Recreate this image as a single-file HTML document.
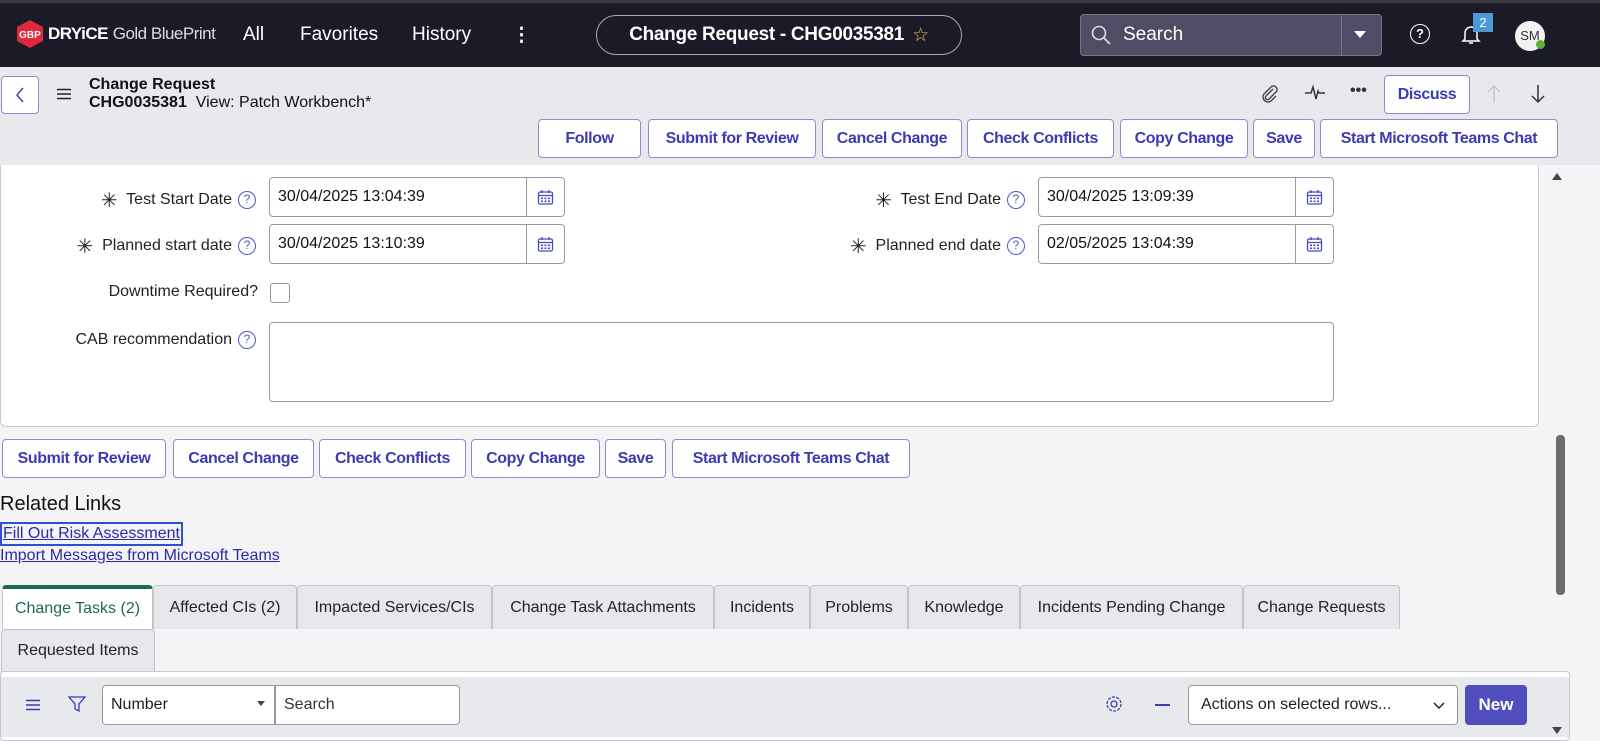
<!DOCTYPE html>
<html><head><meta charset="utf-8"><style>
*{box-sizing:border-box;margin:0;padding:0}
body{width:1600px;height:735px;overflow:hidden;background:#f4f4f6;font-family:"Liberation Sans",sans-serif;color:#1d1d2a;position:relative;font-size:16px}
.a{position:absolute}
.top{left:0;top:0;width:1600px;height:67px;background:#1b1b28;border-top:3px solid #3a3a3e}
.nav{color:#fff;font-size:19px;top:24px}
.btn{position:absolute;height:39px;border:1px solid #8c8ccf;border-radius:4px;background:#fff;color:#3b3bb3;font-size:16px;display:flex;align-items:center;justify-content:center;font-weight:bold;letter-spacing:-0.4px}
.lbl{position:absolute;font-size:16px;color:#222;text-align:right}
.inp{position:absolute;height:40px;border:1px solid #9a9aa2;border-radius:4px;background:#fff;font-size:16px;padding:10px 8px;color:#111}
.cal{position:absolute;right:0;top:0;width:38px;height:38px;border-left:1px solid #9a9aa2;display:flex;align-items:center;justify-content:center}
.q{display:inline-block;width:18px;height:18px;border:1.5px solid #5555c8;border-radius:50%;color:#5555c8;font-size:12px;text-align:center;line-height:15px;margin-left:6px;vertical-align:1px}
.tab{position:absolute;height:44px;border:1px solid #c4c4c8;border-bottom:none;border-radius:4px 4px 0 0;background:#e8e8ec;font-size:16px;display:flex;align-items:center;justify-content:center;color:#222}
</style></head><body>
<svg width="0" height="0" style="position:absolute"><defs><g id="cal"><rect x="1.5" y="3" width="14" height="12" rx="1.5" fill="none" stroke="#4a4ac0" stroke-width="1.3"/><line x1="1.5" y1="6.5" x2="15.5" y2="6.5" stroke="#4a4ac0" stroke-width="1.3"/><line x1="5" y1="1" x2="5" y2="4" stroke="#4a4ac0" stroke-width="1.3"/><line x1="12" y1="1" x2="12" y2="4" stroke="#4a4ac0" stroke-width="1.3"/><g fill="#4a4ac0"><rect x="4" y="8.5" width="2" height="1.6"/><rect x="7.5" y="8.5" width="2" height="1.6"/><rect x="11" y="8.5" width="2" height="1.6"/><rect x="4" y="11.5" width="2" height="1.6"/><rect x="7.5" y="11.5" width="2" height="1.6"/><rect x="11" y="11.5" width="2" height="1.6"/></g></g></defs></svg>
<div class="a top"></div>
<svg class="a" style="left:15px;top:19px" width="30" height="30" viewBox="0 0 30 30"><polygon points="15,1 28,8 28,22 15,29 2,22 2,8" fill="#e0293d"/><text x="15" y="19" font-size="10" font-weight="bold" fill="#fff" text-anchor="middle" font-family="Liberation Sans">GBP</text></svg>
<div class="a" style="left:48px;top:24px;color:#fff;font-size:17px"><b style="letter-spacing:-0.5px">DRYiCE</b> <span style="color:#ddd;letter-spacing:-0.5px">Gold BluePrint</span></div>
<div class="a nav" style="left:243px">All</div>
<div class="a nav" style="left:300px">Favorites</div>
<div class="a nav" style="left:412px">History</div>
<div class="a nav" style="left:512px;font-weight:bold">⋮</div>
<div class="a" style="left:596px;top:15px;width:366px;height:40px;border:1px solid #aaa;border-radius:20px;color:#fff;font-size:19px;font-weight:bold;display:flex;align-items:center;justify-content:center;letter-spacing:-0.3px">Change Request - CHG0035381 <span style="color:#f0c040;margin-left:8px;font-weight:normal">☆</span></div>
<div class="a" style="left:1080px;top:14px;width:302px;height:42px;background:#4f4d66;border:1px solid #777;border-radius:4px"></div>
<div class="a" style="left:1341px;top:15px;width:1px;height:40px;background:#777"></div>
<svg class="a" style="left:1090px;top:24px" width="22" height="22"><circle cx="9" cy="9" r="6.5" stroke="#ddd" stroke-width="1.6" fill="none"/><line x1="14" y1="14" x2="20" y2="20" stroke="#ddd" stroke-width="1.6"/></svg>
<div class="a" style="left:1123px;top:24px;color:#fff;font-size:19px">Search</div>
<div class="a" style="left:1354px;top:31px;border:6px solid transparent;border-top:7px solid #fff"></div>
<div class="a" style="left:1410px;top:24px;width:20px;height:20px;border:1.6px solid #fff;border-radius:50%;color:#fff;font-size:13px;text-align:center;line-height:17px;font-weight:bold">?</div>
<svg class="a" style="left:1461px;top:24px" width="20" height="22"><path d="M4 15 V9 a6 6 0 0 1 12 0 V15 l2 2 H2z M8 19 h4" stroke="#fff" stroke-width="1.5" fill="none"/></svg>
<div class="a" style="left:1473px;top:13px;width:20px;height:19px;background:#4a9ad8;color:#fff;font-size:13px;text-align:center;line-height:19px">2</div>
<div class="a" style="left:1515px;top:21px;width:30px;height:30px;border-radius:50%;background:#f2f2f2;color:#333;font-size:13px;text-align:center;line-height:30px">SM</div>
<div class="a" style="left:1536px;top:40px;width:9px;height:9px;border-radius:50%;background:#5ab432"></div>

<div class="a" style="left:0;top:67px;width:1600px;height:98px;background:#e8e9ed"></div>
<div class="a" style="left:1px;top:76px;width:38px;height:38px;background:#fff;border:1px solid #8c8ccf;border-radius:4px"></div>
<svg class="a" style="left:14px;top:87px" width="12" height="16"><path d="M9 1 L3 8 L9 15" stroke="#3b3bb3" stroke-width="1.4" fill="none"/></svg>
<svg class="a" style="left:56px;top:88px" width="16" height="12"><path d="M1 1.5h14M1 6h14M1 10.5h14" stroke="#222" stroke-width="1.6"/></svg>
<div class="a" style="left:89px;top:76px;font-size:16px;font-weight:bold;color:#111">Change Request</div>
<div class="a" style="left:89px;top:94px;font-size:16px;color:#111"><b>CHG0035381</b>&nbsp; View: Patch Workbench*</div>
<svg class="a" style="left:1260px;top:84px" width="20" height="20"><path d="M13 5 L6 12 a2 2 0 0 0 3 3 L16 8 a3.5 3.5 0 0 0 -5 -5 L4 10 a5 5 0 0 0 7 7 L16 12" stroke="#444" stroke-width="1.4" fill="none"/></svg>
<svg class="a" style="left:1304px;top:83px" width="22" height="20"><path d="M1 10h6l2-6 3 12 2-8 1 2h6" stroke="#333" stroke-width="1.5" fill="none"/></svg>
<div class="a" style="left:1350px;top:82px;font-size:16px;font-weight:bold;color:#333">•••</div>
<div class="btn" style="left:1384px;top:75px;width:86px">Discuss</div>
<svg class="a" style="left:1486px;top:84px" width="16" height="20"><path d="M8 19V2M2 8l6-6 6 6" stroke="#c8c8cc" stroke-width="1.5" fill="none"/></svg>
<svg class="a" style="left:1530px;top:84px" width="16" height="20"><path d="M8 1v17M2 12l6 6 6-6" stroke="#333" stroke-width="1.5" fill="none"/></svg>
<div class="btn" style="left:538px;top:119px;width:103px">Follow</div>
<div class="btn" style="left:648px;top:119px;width:168px">Submit for Review</div>
<div class="btn" style="left:822px;top:119px;width:140px">Cancel Change</div>
<div class="btn" style="left:967px;top:119px;width:147px">Check Conflicts</div>
<div class="btn" style="left:1120px;top:119px;width:128px">Copy Change</div>
<div class="btn" style="left:1253px;top:119px;width:62px">Save</div>
<div class="btn" style="left:1320px;top:119px;width:238px">Start Microsoft Teams Chat</div>

<div class="a" style="left:0;top:165px;width:1539px;height:262px;background:#fff;border:1px solid #c8c8cc;border-top:none;border-radius:0 0 6px 6px"></div>
<div class="a" style="left:1552px;top:168px;border:5px solid transparent;border-bottom:7px solid #444"></div>
<div class="a" style="left:1556px;top:435px;width:9px;height:160px;background:#6c6c6c;border-radius:4px"></div>

<div class="lbl" style="left:0;top:188px;width:256px"><span style="font-size:20px;vertical-align:-3px">✳</span>&nbsp; Test Start Date<span class="q">?</span></div>
<div class="inp" style="left:269px;top:177px;width:296px">30/04/2025 13:04:39<div class="cal"><svg width="17" height="16"><use href="#cal"/></svg></div></div>
<div class="lbl" style="left:0;top:234px;width:256px"><span style="font-size:20px;vertical-align:-3px">✳</span>&nbsp; Planned start date<span class="q">?</span></div>
<div class="inp" style="left:269px;top:224px;width:296px">30/04/2025 13:10:39<div class="cal"><svg width="17" height="16"><use href="#cal"/></svg></div></div>
<div class="lbl" style="left:600px;top:188px;width:425px"><span style="font-size:20px;vertical-align:-3px">✳</span>&nbsp; Test End Date<span class="q">?</span></div>
<div class="inp" style="left:1038px;top:177px;width:296px">30/04/2025 13:09:39<div class="cal"><svg width="17" height="16"><use href="#cal"/></svg></div></div>
<div class="lbl" style="left:600px;top:234px;width:425px"><span style="font-size:20px;vertical-align:-3px">✳</span>&nbsp; Planned end date<span class="q">?</span></div>
<div class="inp" style="left:1038px;top:224px;width:296px">02/05/2025 13:04:39<div class="cal"><svg width="17" height="16"><use href="#cal"/></svg></div></div>
<div class="lbl" style="left:0;top:283px;width:258px">Downtime Required?</div>
<div class="a" style="left:270px;top:283px;width:20px;height:20px;border:1px solid #999;border-radius:3px"></div>
<div class="lbl" style="left:0;top:331px;width:256px">CAB recommendation<span class="q">?</span></div>
<div class="a" style="left:269px;top:322px;width:1065px;height:80px;border:1px solid #9a9aa2;border-radius:4px"></div>

<div class="btn" style="left:2px;top:439px;width:164px">Submit for Review</div>
<div class="btn" style="left:173px;top:439px;width:141px">Cancel Change</div>
<div class="btn" style="left:319px;top:439px;width:147px">Check Conflicts</div>
<div class="btn" style="left:471px;top:439px;width:129px">Copy Change</div>
<div class="btn" style="left:605px;top:439px;width:61px">Save</div>
<div class="btn" style="left:672px;top:439px;width:238px">Start Microsoft Teams Chat</div>
<div class="a" style="left:0;top:493px;font-size:20px;color:#111">Related Links</div>
<div class="a" style="left:0;top:522px;height:24px;border:2px solid #2f4fd0;padding:0 1px;font-size:16px;color:#2a2aa8;text-decoration:underline;line-height:20px">Fill Out Risk Assessment</div>
<div class="a" style="left:0;top:547px;font-size:16px;color:#2a2aa8;text-decoration:underline">Import Messages from Microsoft Teams</div>

<div class="tab" style="left:2px;top:585px;width:151px;background:#fff;border-top:4px solid #1e6b52;color:#1e6b52">Change Tasks (2)</div>
<div class="tab" style="left:153px;top:585px;width:144px">Affected CIs (2)</div>
<div class="tab" style="left:297px;top:585px;width:195px">Impacted Services/CIs</div>
<div class="tab" style="left:492px;top:585px;width:222px">Change Task Attachments</div>
<div class="tab" style="left:714px;top:585px;width:96px">Incidents</div>
<div class="tab" style="left:810px;top:585px;width:98px">Problems</div>
<div class="tab" style="left:908px;top:585px;width:112px">Knowledge</div>
<div class="tab" style="left:1020px;top:585px;width:223px">Incidents Pending Change</div>
<div class="tab" style="left:1243px;top:585px;width:157px">Change Requests</div>
<div class="tab" style="left:1px;top:629px;width:154px;height:43px">Requested Items</div>
<div class="a" style="left:0;top:671px;width:1570px;height:70px;background:#fff;border:1px solid #c8c8cc;border-radius:4px"></div>
<div class="a" style="left:1px;top:677px;width:1568px;height:60px;background:#e8e9ed"></div>
<svg class="a" style="left:25px;top:699px" width="16" height="12"><path d="M1 1.5h14M1 6h14M1 10.5h14" stroke="#3b3bb3" stroke-width="1.6"/></svg>
<svg class="a" style="left:68px;top:695px" width="18" height="18"><path d="M1 2h16l-6 7v7l-4-2v-5z" stroke="#3b3bb3" stroke-width="1.3" fill="none"/></svg>
<div class="a" style="left:102px;top:685px;width:173px;height:40px;background:#fff;border:1px solid #999;border-radius:4px 0 0 4px;padding:10px 8px;font-size:16px">Number<span style="position:absolute;right:9px;top:15px;border:4px solid transparent;border-top:5px solid #444"></span></div>
<div class="a" style="left:275px;top:685px;width:185px;height:40px;background:#fff;border:1px solid #999;border-radius:0 4px 4px 0;padding:10px 8px;font-size:16px;color:#333">Search</div>
<svg class="a" style="left:1104px;top:694px" width="20" height="20"><circle cx="10" cy="10" r="3" fill="none" stroke="#3b3bb3" stroke-width="1.3"/><circle cx="10" cy="10" r="7" fill="none" stroke="#3b3bb3" stroke-width="1.3" stroke-dasharray="3 1.4"/></svg>
<div class="a" style="left:1155px;top:704px;width:15px;height:2px;background:#3b3bb3"></div>
<div class="a" style="left:1188px;top:685px;width:270px;height:40px;background:#fff;border:1px solid #999;border-radius:4px;padding:10px 12px;font-size:16px">Actions on selected rows...<svg style="position:absolute;right:12px;top:16px" width="12" height="8"><path d="M1 1l5 5 5-5" stroke="#222" stroke-width="1.5" fill="none"/></svg></div>
<div class="a" style="left:1465px;top:685px;width:62px;height:40px;background:#4f4fbe;border-radius:4px;color:#fff;font-weight:bold;font-size:17px;text-align:center;line-height:40px">New</div>
<div class="a" style="left:1552px;top:727px;border:5px solid transparent;border-top:7px solid #444"></div>
</body></html>
